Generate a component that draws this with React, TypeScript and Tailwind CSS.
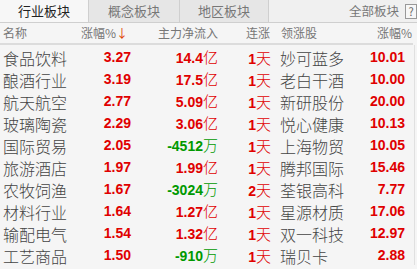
import React from "react";

const rows = [
  ["食品饮料", "3.27", "14.4", "亿", "r", "1", "妙可蓝多", "10.01"],
  ["酿酒行业", "3.19", "17.5", "亿", "r", "1", "老白干酒", "10.00"],
  ["航天航空", "2.77", "5.09", "亿", "r", "1", "新研股份", "20.00"],
  ["玻璃陶瓷", "2.29", "3.06", "亿", "r", "1", "悦心健康", "10.13"],
  ["国际贸易", "2.05", "-4512", "万", "g", "1", "上海物贸", "10.05"],
  ["旅游酒店", "1.97", "1.99", "亿", "r", "1", "腾邦国际", "15.46"],
  ["农牧饲渔", "1.67", "-3024", "万", "g", "2", "荃银高科", "7.77"],
  ["材料行业", "1.64", "1.27", "亿", "r", "1", "星源材质", "17.06"],
  ["输配电气", "1.54", "1.32", "亿", "r", "1", "双一科技", "12.97"],
  ["工艺商品", "1.50", "-910", "万", "g", "1", "瑞贝卡", "2.88"],
];

const cjk = { fontFamily: '"Noto Sans CJK SC", "Noto Sans", sans-serif' };
const num = { fontFamily: '"Liberation Sans", Arial, "Noto Sans CJK SC", sans-serif' };

export default function App() {
  return (
    <div className="w-[417px] h-[269px] bg-[#f5f5f5] overflow-hidden text-[#333]" style={cjk}>
      {/* Tabs */}
      <div className="flex h-[23px] border-b border-[#cfcfcf] bg-[#f0f0f0]">
        <div className="w-[89px] flex items-center justify-center text-[13px] text-[#222] bg-[#f7f7f7] border-r border-[#cfcfcf]">行业板块</div>
        <div className="w-[91px] flex items-center justify-center text-[13px] text-[#777] bg-[#e6e6e6] border-r border-[#cfcfcf]">概念板块</div>
        <div className="w-[89px] flex items-center justify-center text-[13px] text-[#777] bg-[#e6e6e6] border-r border-[#cfcfcf]">地区板块</div>
        <div className="flex-1 flex items-center justify-end">
          <span className="text-[12.5px] text-[#777] mr-[6px]">全部板块</span>
          <span className="w-[12px] h-[15px] border border-[#999] text-[11px] leading-[13px] text-[#666] flex items-center justify-center bg-[#f7f7f7]">?</span>
        </div>
      </div>
      {/* Header */}
      <div className="grid grid-cols-[75px_53px_90px_52px_80px_62px] h-[22px] items-center border-b-2 border-[#dcdcdc] text-[12px] text-[#777] mr-[4px]">
        <div className="pl-[3px]">名称</div>
        <div className="text-right whitespace-nowrap">涨幅%<span className="text-[#e04000]">↓</span></div>
        <div className="text-right">主力净流入</div>
        <div className="text-right">连涨</div>
        <div className="pl-[11px]">领涨股</div>
        <div className="text-right">涨幅%</div>
      </div>
      {/* Rows */}
      <div className="border-r border-[#e0e0e0] mr-[2px]">
        {rows.map((r) => (
          <div key={r[0]} className="grid grid-cols-[75px_56px_87px_53px_84px_50px] h-[22px] items-center">
            <div className="pl-[3px] text-[16px] text-[#444] font-light leading-none">{r[0]}</div>
            <div className="text-right font-bold text-[14px] text-[#e00000]" style={num}>{r[1]}</div>
            <div className={`text-right font-bold text-[14px] whitespace-nowrap ${r[4] === "r" ? "text-[#e00000]" : "text-[#009900]"}`} style={num}>
              {r[2]}
              <span className="font-light text-[15px]" style={cjk}>{r[3]}</span>
            </div>
            <div className="text-right text-[#e00000] whitespace-nowrap">
              <span className="font-bold text-[14px]" style={num}>{r[5]}</span>
              <span className="text-[15px] font-light" style={cjk}>天</span>
            </div>
            <div className="pl-[9px] text-[16px] text-[#444] font-light whitespace-nowrap leading-none">{r[6]}</div>
            <div className="text-right font-bold text-[14px] text-[#e00000]" style={num}>{r[7]}</div>
          </div>
        ))}
      </div>
    </div>
  );
}
